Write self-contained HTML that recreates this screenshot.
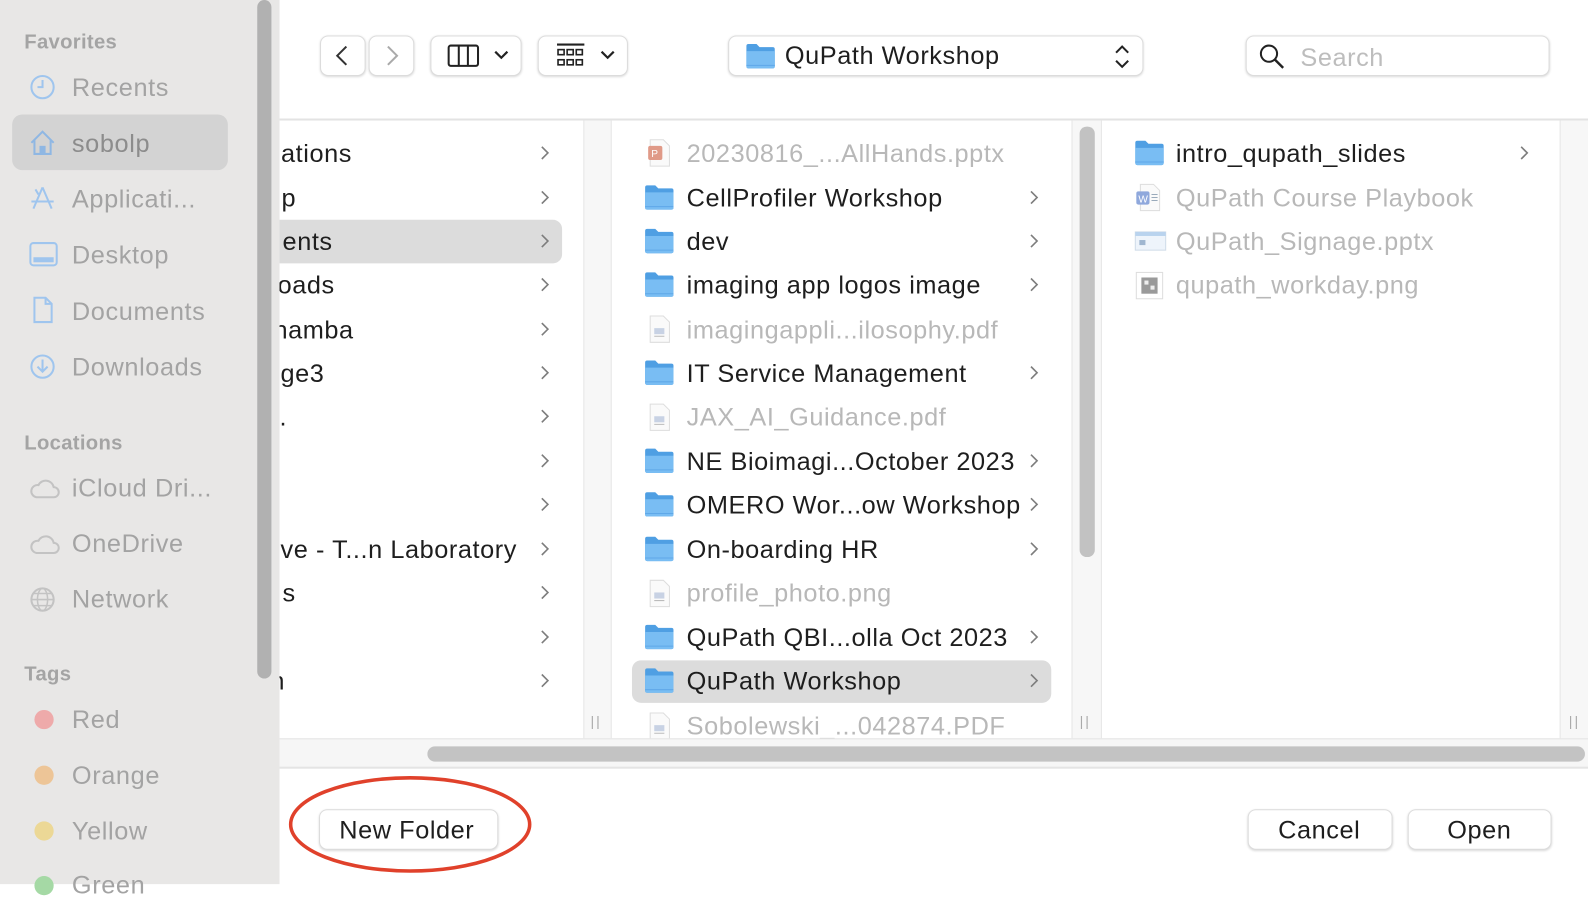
<!DOCTYPE html>
<html><head><meta charset="utf-8"><style>
*{margin:0;padding:0;box-sizing:border-box}
html,body{width:1588px;height:884px;overflow:hidden;background:#fff;font-family:"Liberation Sans",sans-serif}
#w{position:absolute;left:0;top:0;width:1568px;height:873px;transform:scale(1.01276);transform-origin:0 0;background:#fff}
.a{position:absolute}
.sb{left:0;top:0;width:276px;height:873px;background:#e8e7e6}
.sh{position:absolute;left:24px;font-size:20px;font-weight:bold;color:#a4a4a4;letter-spacing:.3px}
.si{position:absolute;left:71px;font-size:25px;color:#a3a3a3;line-height:30px;letter-spacing:.6px}
.ic{position:absolute;left:28px}
.btn{position:absolute;background:#fff;border:1px solid #dcdcdc;border-radius:8px;box-shadow:0 1px 2px rgba(0,0,0,.15)}
.r{position:absolute;font-size:25px;line-height:30px;color:#1e1e1e;white-space:nowrap;letter-spacing:.55px}
.g{color:#b8b8b8}
.sel{position:absolute;background:#dcdcdc;border-radius:9px}
.gut{position:absolute;background:#f7f7f7;border-left:1px solid #e6e6e6;border-right:1px solid #e6e6e6}
.hd{position:absolute;color:#aaa;font-size:14px;letter-spacing:2px}
#c1{position:absolute;left:276px;top:119px;width:300px;height:610px;overflow:hidden}
#c1 .r{top:auto}
</style></head><body><div id="w">
<svg width="0" height="0" style="position:absolute"><defs>
<symbol id="fo" viewBox="0 0 30 26"><path d="M1 3q0-2 2-2h8l3 3h13q2 0 2 2v17q0 2-2 2H3q-2 0-2-2z" fill="#4f9fe3"/><path d="M1 8h28v15q0 2-2 2H3q-2 0-2-2z" fill="#79bdf3"/><path d="M1 22h28" stroke="#5fa8e8" stroke-width="1"/></symbol>
<symbol id="fi" viewBox="0 0 30 30"><path d="M6 2h13l6 6v20H6z" fill="#fafafa" stroke="#ddd"/><rect x="10" y="14" width="10" height="6" fill="#c8d2e4"/><path d="M10 22h10" stroke="#bbb"/></symbol>
<symbol id="chev" viewBox="0 0 10 16"><path d="M2 2l6 6-6 6" fill="none" stroke="#7d7d7d" stroke-width="1.6"/></symbol>
</defs></svg>

<div class="a sb"></div>
<div class="a" style="left:254px;top:0;width:14px;height:670px;background:#b1b1b1;border-radius:7px"></div>
<div class="sh" style="top:31px">Favorites</div>
<div class="a" style="left:12px;top:113px;width:213px;height:55px;background:#d3d3d3;border-radius:10px"></div>
<svg class="ic" style="top:72px" width="28" height="28" viewBox="0 0 28 28"><circle cx="14" cy="14" r="11" fill="none" stroke="#9fc5ee" stroke-width="2"/><path d="M14 7v7h-5" fill="none" stroke="#9fc5ee" stroke-width="2"/></svg>
<div class="si" style="top:72px">Recents</div>
<svg class="ic" style="top:127px" width="28" height="28" viewBox="0 0 28 28"><path d="M3 14L14 3l11 11M6 11v14h16V11" fill="none" stroke="#8fb7e3" stroke-width="2"/><rect x="11" y="17" width="6" height="8" fill="#8fb7e3"/></svg>
<div class="si" style="top:127px;color:#8c8c8c">sobolp</div>
<svg class="ic" style="top:182px" width="28" height="28" viewBox="0 0 28 28"><path d="M14 3L5 24M14 3l9 21M3 17h22M10 10l-3-5M18 10" fill="none" stroke="#9fc5ee" stroke-width="2"/></svg>
<div class="si" style="top:182px">Applicati...</div>
<svg class="ic" style="top:238px" width="30" height="26" viewBox="0 0 30 26"><rect x="2" y="2" width="26" height="22" rx="3" fill="none" stroke="#9fc5ee" stroke-width="2"/><rect x="5" y="16" width="20" height="5" fill="#9fc5ee"/></svg>
<div class="si" style="top:237px">Desktop</div>
<svg class="ic" style="top:292px" width="28" height="28" viewBox="0 0 28 28"><path d="M6 2h11l6 6v18H6z M17 2v6h6" fill="none" stroke="#9fc5ee" stroke-width="2"/></svg>
<div class="si" style="top:293px">Documents</div>
<svg class="ic" style="top:348px" width="28" height="28" viewBox="0 0 28 28"><circle cx="14" cy="14" r="11" fill="none" stroke="#9fc5ee" stroke-width="2"/><path d="M14 7v12M9 14l5 5 5-5" fill="none" stroke="#9fc5ee" stroke-width="2"/></svg>
<div class="si" style="top:348px">Downloads</div>
<div class="sh" style="top:427px">Locations</div>
<svg class="ic" style="top:470px" width="32" height="24" viewBox="0 0 32 24"><path d="M8 21h17a5 5 0 0 0 0-10 8 8 0 0 0-15-2 6 6 0 0 0-2 12z" fill="none" stroke="#c3c3c3" stroke-width="2"/></svg>
<div class="si" style="top:467px">iCloud Dri...</div>
<svg class="ic" style="top:525px" width="32" height="24" viewBox="0 0 32 24"><path d="M8 21h17a5 5 0 0 0 0-10 8 8 0 0 0-15-2 6 6 0 0 0-2 12z" fill="none" stroke="#c3c3c3" stroke-width="2"/></svg>
<div class="si" style="top:522px">OneDrive</div>
<svg class="ic" style="top:578px" width="28" height="28" viewBox="0 0 28 28"><circle cx="14" cy="14" r="11" fill="none" stroke="#c3c3c3" stroke-width="2"/><ellipse cx="14" cy="14" rx="5" ry="11" fill="none" stroke="#c3c3c3" stroke-width="1.5"/><path d="M3 14h22M5 8h18M5 20h18" stroke="#c3c3c3" stroke-width="1.5"/></svg>
<div class="si" style="top:577px">Network</div>
<div class="sh" style="top:655px">Tags</div>
<div class="a" style="left:34px;top:701px;width:19px;height:19px;border-radius:50%;background:#eeaaaa"></div>
<div class="si" style="top:696px">Red</div>
<div class="a" style="left:34px;top:756px;width:19px;height:19px;border-radius:50%;background:#edc597"></div>
<div class="si" style="top:751px">Orange</div>
<div class="a" style="left:34px;top:811px;width:19px;height:19px;border-radius:50%;background:#ecd896"></div>
<div class="si" style="top:806px">Yellow</div>
<div class="a" style="left:34px;top:865px;width:19px;height:19px;border-radius:50%;background:#a5d9a5"></div>
<div class="si" style="top:859px">Green</div>

<!-- toolbar -->
<div class="btn" style="left:316px;top:35px;width:45px;height:40px"></div>
<svg class="a" style="left:328px;top:43px" width="20" height="24"><path d="M14 3L5 12l9 9" fill="none" stroke="#333" stroke-width="2"/></svg>
<div class="btn" style="left:364px;top:35px;width:45px;height:40px"></div>
<svg class="a" style="left:378px;top:43px" width="20" height="24"><path d="M5 3l9 9-9 9" fill="none" stroke="#aaa" stroke-width="2"/></svg>
<div class="btn" style="left:425px;top:35px;width:90px;height:40px"></div>
<svg class="a" style="left:441px;top:43px" width="34" height="24"><rect x="2" y="2" width="29" height="20" rx="2" fill="none" stroke="#222" stroke-width="2"/><path d="M12 2v20M21 2v20" stroke="#222" stroke-width="2"/></svg>
<svg class="a" style="left:487px;top:48px" width="16" height="14"><path d="M2 3l6 6 6-6" fill="none" stroke="#222" stroke-width="2.2"/></svg>
<div class="btn" style="left:531px;top:35px;width:89px;height:40px"></div>
<svg class="a" style="left:548px;top:42px" width="32" height="28"><path d="M2 2h27" stroke="#222" stroke-width="2"/><g fill="none" stroke="#222" stroke-width="1.6"><rect x="3" y="7" width="6" height="5"/><rect x="12" y="7" width="6" height="5"/><rect x="21" y="7" width="6" height="5"/><rect x="3" y="17" width="6" height="5"/><rect x="12" y="17" width="6" height="5"/><rect x="21" y="17" width="6" height="5"/></g></svg>
<svg class="a" style="left:592px;top:48px" width="16" height="14"><path d="M2 3l6 6 6-6" fill="none" stroke="#222" stroke-width="2.2"/></svg>
<div class="btn" style="left:719px;top:35px;width:410px;height:40px"></div>
<svg class="a" style="left:736px;top:42px" width="30" height="27"><use href="#fo"/></svg>
<div class="r" style="left:775px;top:40px">QuPath Workshop</div>
<svg class="a" style="left:1098px;top:43px" width="20" height="26"><path d="M4 9l6-6 6 6M4 17l6 6 6-6" fill="none" stroke="#222" stroke-width="2"/></svg>
<div class="btn" style="left:1230px;top:35px;width:300px;height:40px"></div>
<svg class="a" style="left:1242px;top:42px" width="28" height="28"><circle cx="11" cy="11" r="8" fill="none" stroke="#222" stroke-width="2"/><path d="M17 17l8 8" stroke="#222" stroke-width="2.4"/></svg>
<div class="r g" style="left:1284px;top:42px;color:#bdbdbd">Search</div>
<div class="a" style="left:276px;top:117px;width:1292px;height:2px;background:#e3e3e3"></div>

<!-- column 1 -->
<div id="c1">
<div class="sel" style="left:-10px;top:98px;width:289px;height:43px"></div>
<div class="r" style="left:-6px;top:18px">ıations</div>
<div class="r" style="left:2px;top:62px">p</div>
<div class="r" style="left:3px;top:105px">ents</div>
<div class="r" style="left:-8px;top:148px">loads</div>
<div class="r" style="left:-6px;top:192px">hamba</div>
<div class="r" style="left:1px;top:235px">ge3</div>
<div class="r" style="left:0px;top:278px">.</div>
<div class="r" style="left:1px;top:409px">ve - T...n Laboratory</div>
<div class="r" style="left:3px;top:452px">s</div>
<div class="r" style="left:-9px;top:539px">n</div>
</div>
<svg class="a" style="left:533px;top:143px" width="10" height="16"><use href="#chev"/></svg>
<svg class="a" style="left:533px;top:187px" width="10" height="16"><use href="#chev"/></svg>
<svg class="a" style="left:533px;top:230px" width="10" height="16"><use href="#chev"/></svg>
<svg class="a" style="left:533px;top:273px" width="10" height="16"><use href="#chev"/></svg>
<svg class="a" style="left:533px;top:317px" width="10" height="16"><use href="#chev"/></svg>
<svg class="a" style="left:533px;top:360px" width="10" height="16"><use href="#chev"/></svg>
<svg class="a" style="left:533px;top:403px" width="10" height="16"><use href="#chev"/></svg>
<svg class="a" style="left:533px;top:447px" width="10" height="16"><use href="#chev"/></svg>
<svg class="a" style="left:533px;top:490px" width="10" height="16"><use href="#chev"/></svg>
<svg class="a" style="left:533px;top:534px" width="10" height="16"><use href="#chev"/></svg>
<svg class="a" style="left:533px;top:577px" width="10" height="16"><use href="#chev"/></svg>
<svg class="a" style="left:533px;top:621px" width="10" height="16"><use href="#chev"/></svg>
<svg class="a" style="left:533px;top:664px" width="10" height="16"><use href="#chev"/></svg>

<div class="gut" style="left:576px;top:119px;width:28px;height:610px"></div>
<div class="hd" style="left:583px;top:704px">||</div>

<!-- column 2 -->
<div class="sel" style="left:624px;top:652px;width:414px;height:42px"></div>
<svg class="a" style="left:636px;top:136px" width="30" height="30" viewBox="0 0 30 30"><path d="M6 2h13l6 6v20H6z" fill="#fafafa" stroke="#ddd"/><rect x="4" y="8" width="14" height="14" rx="2" fill="#e09a88"/><text x="7" y="19" font-size="10" fill="#fff" font-family="Liberation Sans">P</text></svg>
<div class="r g" style="left:678px;top:137px">20230816_...AllHands.pptx</div>
<svg class="a" style="left:636px;top:182px" width="30" height="26"><use href="#fo"/></svg>
<div class="r" style="left:678px;top:181px">CellProfiler Workshop</div>
<svg class="a" style="left:636px;top:225px" width="30" height="26"><use href="#fo"/></svg>
<div class="r" style="left:678px;top:224px">dev</div>
<svg class="a" style="left:636px;top:268px" width="30" height="26"><use href="#fo"/></svg>
<div class="r" style="left:678px;top:267px">imaging app logos image</div>
<svg class="a" style="left:636px;top:310px" width="30" height="30"><use href="#fi"/></svg>
<div class="r g" style="left:678px;top:311px">imagingappli...ilosophy.pdf</div>
<svg class="a" style="left:636px;top:355px" width="30" height="26"><use href="#fo"/></svg>
<div class="r" style="left:678px;top:354px">IT Service Management</div>
<svg class="a" style="left:636px;top:397px" width="30" height="30"><use href="#fi"/></svg>
<div class="r g" style="left:678px;top:397px">JAX_AI_Guidance.pdf</div>
<svg class="a" style="left:636px;top:442px" width="30" height="26"><use href="#fo"/></svg>
<div class="r" style="left:678px;top:441px">NE Bioimagi...October 2023</div>
<svg class="a" style="left:636px;top:485px" width="30" height="26"><use href="#fo"/></svg>
<div class="r" style="left:678px;top:484px">OMERO Wor...ow Workshop</div>
<svg class="a" style="left:636px;top:529px" width="30" height="26"><use href="#fo"/></svg>
<div class="r" style="left:678px;top:528px">On-boarding HR</div>
<svg class="a" style="left:636px;top:571px" width="30" height="30"><use href="#fi"/></svg>
<div class="r g" style="left:678px;top:571px">profile_photo.png</div>
<svg class="a" style="left:636px;top:616px" width="30" height="26"><use href="#fo"/></svg>
<div class="r" style="left:678px;top:615px">QuPath QBI...olla Oct 2023</div>
<svg class="a" style="left:636px;top:659px" width="30" height="26"><use href="#fo"/></svg>
<div class="r" style="left:678px;top:658px">QuPath Workshop</div>
<svg class="a" style="left:636px;top:702px" width="30" height="30"><use href="#fi"/></svg>
<div class="r g" style="left:678px;top:702px">Sobolewski_...042874.PDF</div>
<svg class="a" style="left:1016px;top:187px" width="10" height="16"><use href="#chev"/></svg>
<svg class="a" style="left:1016px;top:230px" width="10" height="16"><use href="#chev"/></svg>
<svg class="a" style="left:1016px;top:273px" width="10" height="16"><use href="#chev"/></svg>
<svg class="a" style="left:1016px;top:360px" width="10" height="16"><use href="#chev"/></svg>
<svg class="a" style="left:1016px;top:447px" width="10" height="16"><use href="#chev"/></svg>
<svg class="a" style="left:1016px;top:490px" width="10" height="16"><use href="#chev"/></svg>
<svg class="a" style="left:1016px;top:534px" width="10" height="16"><use href="#chev"/></svg>
<svg class="a" style="left:1016px;top:621px" width="10" height="16"><use href="#chev"/></svg>
<svg class="a" style="left:1016px;top:664px" width="10" height="16"><use href="#chev"/></svg>

<div class="gut" style="left:1058px;top:119px;width:30px;height:610px"></div>
<div class="a" style="left:1066px;top:125px;width:15px;height:425px;background:#c2c2c2;border-radius:7px"></div>
<div class="hd" style="left:1066px;top:704px">||</div>

<!-- column 3 -->
<svg class="a" style="left:1120px;top:138px" width="30" height="26"><use href="#fo"/></svg>
<div class="r" style="left:1161px;top:137px">intro_qupath_slides</div>
<svg class="a" style="left:1500px;top:143px" width="10" height="16"><use href="#chev"/></svg>
<svg class="a" style="left:1120px;top:180px" width="30" height="30" viewBox="0 0 30 30"><path d="M6 2h13l6 6v20H6z" fill="#fafafa" stroke="#ddd"/><rect x="2" y="9" width="13" height="13" rx="2" fill="#8fa8dc"/><text x="4" y="20" font-size="10" fill="#fff" font-family="Liberation Sans">W</text><path d="M17 12h6M17 15h6M17 18h6" stroke="#9ab"/></svg>
<div class="r g" style="left:1161px;top:181px">QuPath Course Playbook</div>
<svg class="a" style="left:1120px;top:226px" width="32" height="24" viewBox="0 0 32 24"><rect x="1" y="3" width="30" height="18" fill="#eef4fb" stroke="#cfdbe8"/><rect x="1" y="3" width="30" height="4" fill="#b9d3ee"/><rect x="5" y="11" width="6" height="5" fill="#9fb6d0"/></svg>
<div class="r g" style="left:1161px;top:224px">QuPath_Signage.pptx</div>
<svg class="a" style="left:1120px;top:267px" width="30" height="30" viewBox="0 0 30 30"><rect x="2" y="2" width="26" height="26" fill="#fff" stroke="#ddd"/><rect x="7" y="7" width="16" height="16" fill="#9a9a9a"/><rect x="10" y="10" width="4" height="4" fill="#eee"/><rect x="16" y="15" width="4" height="4" fill="#eee"/></svg>
<div class="r g" style="left:1161px;top:267px">qupath_workday.png</div>
<div class="gut" style="left:1540px;top:119px;width:28px;height:610px;border-right:none"></div>
<div class="hd" style="left:1549px;top:704px">||</div>

<!-- horizontal scroll -->
<div class="a" style="left:276px;top:729px;width:1292px;height:30px;background:#f6f6f6;border-top:1px solid #e4e4e4;border-bottom:2px solid #e4e4e4"></div>
<div class="a" style="left:422px;top:737px;width:1143px;height:15px;background:#c3c3c3;border-radius:8px"></div>

<!-- bottom -->
<div class="btn" style="left:315px;top:799px;width:177px;height:40px"></div>
<div class="r" style="left:335px;top:805px">New Folder</div>
<div class="btn" style="left:1232px;top:799px;width:143px;height:40px"></div>
<div class="r" style="left:1262px;top:805px">Cancel</div>
<div class="btn" style="left:1390px;top:799px;width:142px;height:40px"></div>
<div class="r" style="left:1429px;top:805px">Open</div>
<svg class="a" style="left:280px;top:762px" width="250" height="104"><ellipse cx="125" cy="52" rx="118" ry="46" fill="none" stroke="#e0412b" stroke-width="3.5"/></svg>
</div></body></html>
